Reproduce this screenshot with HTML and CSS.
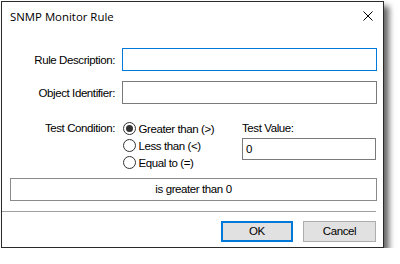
FILE: index.html
```html
<!DOCTYPE html>
<html>
<head>
<meta charset="utf-8">
<link rel="stylesheet" href="styles.css">
</head>
<body>
<div class="window">
  <div class="titlebar">
    <span class="title">SNMP Monitor Rule</span>
    <svg class="close" width="10" height="10" viewBox="0 0 10 10"><path d="M0.5 0.5 L9.5 9.5 M9.5 0.5 L0.5 9.5" stroke="#000" stroke-width="1" fill="none"/></svg>
  </div>
  <div class="body">
    <div class="form">
      <div class="lbl">Rule Description:</div>
      <div class="input focus"></div>
      <div class="lbl">Object Identifier:</div>
      <div class="input"></div>
    </div>
    <div class="cond">
      <div class="lbl cond-lbl">Test Condition:</div>
      <div class="radios">
        <div class="radio-row"><span class="radio checked"></span><span class="rtext">Greater than (&gt;)</span></div>
        <div class="radio-row"><span class="radio"></span><span class="rtext">Less than (&lt;)</span></div>
        <div class="radio-row"><span class="radio"></span><span class="rtext">Equal to (=)</span></div>
      </div>
      <div class="tv">
        <div class="tv-lbl">Test Value:</div>
        <div class="input tv-input">0</div>
      </div>
    </div>
    <div class="result">is greater than 0</div>
  </div>
  <div class="sep"></div>
  <div class="buttons">
    <div class="btn default">OK</div>
    <div class="btn cancel">Cancel</div>
  </div>
</div>
</body>
</html>
```
FILE: styles.css
```css
html, body {
  margin: 0;
  padding: 0;
  background: #fff;
}
body {
  font-family: "Liberation Sans", Arial, sans-serif;
  font-size: 11.5px;
  letter-spacing: -0.4px;
  color: #000;
}
.window {
  box-sizing: border-box;
  margin: 1px 0 0 1px;
  width: 383px;
  height: 247px;
  border: 1px solid #2a2a2a;
  background: #fff;
  box-shadow: 5px 5px 6px rgba(0,0,0,0.6);
  display: flex;
  flex-direction: column;
}
.titlebar {
  height: 29px;
  display: flex;
  align-items: center;
  justify-content: space-between;
  padding: 0 10px 0 8px;
}
.title {
  font-family: "Open Sans", "Noto Sans", sans-serif;
  font-size: 11.4px;
  letter-spacing: 0;
  line-height: 29px;
}
.close {
  display: block;
  margin-top: -1px;
}
.body {
  padding: 17px 6px 0 8px;
}
.form {
  display: grid;
  grid-template-columns: 105px 1fr;
  column-gap: 7px;
  row-gap: 10px;
  grid-auto-rows: 23px;
}
.lbl {
  text-align: right;
  align-self: center;
}
.input {
  box-sizing: border-box;
  border: 1px solid #7a7a7a;
  background: #fff;
  height: 23px;
}
.input.focus {
  border-color: #0078d7;
}
.cond {
  display: flex;
  margin-top: 16px;
}
.cond-lbl {
  width: 105px;
  margin-right: 7px;
  line-height: 17px;
  align-self: flex-start;
}
.radios {
  width: 120px;
  display: flex;
  flex-direction: column;
}
.radio-row {
  height: 17px;
  display: flex;
  align-items: center;
}
.radio {
  box-sizing: border-box;
  width: 13px;
  height: 13px;
  border: 1px solid #333;
  border-radius: 50%;
  background: #fff;
  display: flex;
  align-items: center;
  justify-content: center;
  margin-left: 0.5px;
}
.radio.checked::after {
  content: "";
  width: 7px;
  height: 7px;
  border-radius: 50%;
  background: #333;
}
.rtext {
  margin-left: 3px;
}
.tv {
  display: flex;
  flex-direction: column;
}
.tv-lbl {
  line-height: 17px;
}
.tv-input {
  margin-top: 1px;
  width: 134px;
  height: 22px;
  line-height: 20px;
  padding-left: 3px;
}
.result {
  box-sizing: border-box;
  margin-top: 7px;
  height: 23px;
  border: 1px solid #8a8a8a;
  text-align: center;
  line-height: 21px;
}
.sep {
  margin: 10px 7px 0 0;
  height: 1px;
  background: #a0a0a0;
}
.buttons {
  display: flex;
  justify-content: flex-end;
  gap: 10px;
  margin-top: 9px;
  padding-right: 7px;
}
.btn {
  box-sizing: border-box;
  height: 21px;
  background: #e1e1e1;
  border: 1px solid #adadad;
  text-align: center;
  line-height: 19px;
  width: 73px;
}
.btn.default {
  width: 72px;
  border: 2px solid #0078d7;
  line-height: 17px;
}
```
